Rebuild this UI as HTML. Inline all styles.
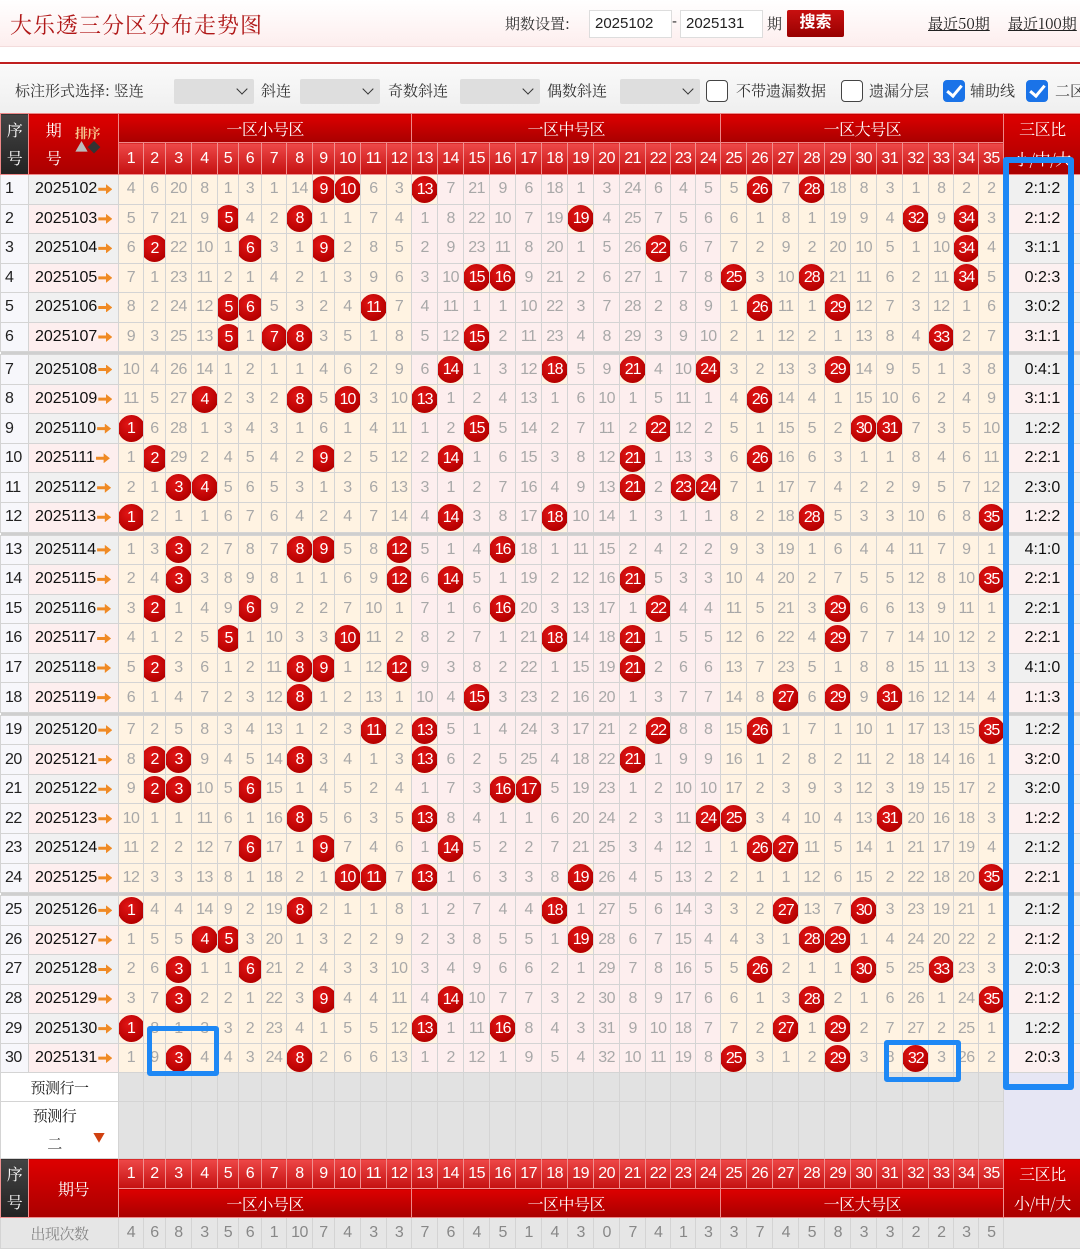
<!DOCTYPE html>
<html><head><meta charset="utf-8">
<style>
*{box-sizing:border-box;margin:0;padding:0}
body{width:1080px;height:1253px;overflow:hidden;background:#fff;font-family:"Liberation Sans","Noto Sans CJK SC",sans-serif;position:relative}
.sf{font-family:"Noto Serif CJK SC","Noto Serif CJK JP","Noto Serif CJK","Source Han Serif SC","Liberation Serif",serif}
.top{position:absolute;left:0;top:0;width:1080px;height:47px;background:linear-gradient(#fff,#fdeeee);border-bottom:1px solid #f3dcdc}
.title{position:absolute;left:10px;top:9px;font-size:22px;color:#b01818;letter-spacing:1px;font-weight:normal}
.q{position:absolute;top:13px;font-size:15px;color:#333}
.inp{position:absolute;top:10px;height:28px;border:1px solid #ddd;background:#fff;font-size:15px;padding:4px 0 0 5px;color:#222}
.btn{position:absolute;left:787px;top:10px;width:57px;height:27px;background:linear-gradient(#c81010,#980000);color:#fff;font-size:16px;font-weight:bold;text-align:center;line-height:26px;border-radius:2px}
.lnk{position:absolute;top:13px;font-size:15px;color:#222;text-decoration:underline;white-space:nowrap}
.rl{position:absolute;left:0;top:62px;width:1080px;height:2px;background:#c02020}
.fb{position:absolute;left:0;top:65px;width:1080px;height:48px;background:linear-gradient(#fafafa,#efefef)}
.ft{position:absolute;top:80px;font-size:15px;color:#333;white-space:nowrap}
.sel{position:absolute;top:79px;width:80px;height:25px;background:#dedede;border-radius:2px}
.sel:after{content:"";position:absolute;right:8px;top:6px;width:7px;height:7px;border-right:1.5px solid #333;border-bottom:1.5px solid #333;transform:rotate(45deg)}
.cb{position:absolute;top:80px;width:22px;height:22px;border:1.5px solid #444;border-radius:4px;background:#fff}
.cb.on{background:#1a73e8;border-color:#1a73e8}
.cb.on:after{content:"";position:absolute;left:6px;top:1px;width:6px;height:12px;border-right:3px solid #fff;border-bottom:3px solid #fff;transform:rotate(40deg)}
table{position:absolute;left:0;top:113px;width:1080px;border-collapse:collapse;table-layout:fixed}
td{border:1px solid #d4d4d4;text-align:center;font-size:16px;color:#a8a8a8;padding:0;white-space:nowrap;overflow:hidden;letter-spacing:-0.5px}
tr.r{height:29.55px}
tr.sp td{height:3px;background:#cfcfcf;border:0}
col.a{background:#fff3e2}col.b{background:#fdeeee}
td.s{background:#f7f7fb;color:#222;text-align:left;padding-left:4px}
td.p{color:#111;text-align:left;padding-left:6px;letter-spacing:0}
tr.o td.p{background:#f0f0f0}tr.e td.p{background:#fdeeee}
td.z{color:#111;letter-spacing:0}
tr.o td.z{background:#f0f0f0}tr.e td.z{background:#fcf0f0}
td.h{background:#fff3e2}
b{display:inline-block;width:27px;height:27px;border-radius:50%;background:radial-gradient(circle at 40% 35%,#e21616,#b60000 70%);color:#fff;font-weight:normal;line-height:27px;font-size:16px;letter-spacing:-1px;margin:0 -3px;vertical-align:middle}
i{display:inline-block;width:14px;height:10px;background:#f08a24;clip-path:polygon(0 35%,55% 35%,55% 0,100% 50%,55% 100%,55% 65%,0 65%);margin-left:1px;vertical-align:-1px}
.hz td{background:linear-gradient(#d00,#a80000);color:#fff;font-size:16px;border-color:#e88}
.hn td{background:linear-gradient(#ee4848,#c41010);color:#fff;font-size:16px;border-color:#f09090}
td.hs{background:linear-gradient(#444,#222)!important;color:#fff;font-size:16px;line-height:28px}
td.hp{background:linear-gradient(#d00,#a00)!important;color:#fff;font-size:16px;position:relative}
td.pr{background:#e2e2e2}
td.pl{background:#fff;color:#222;font-size:15px}
td.pz{background:#e6e6f4}
tr.cnt td{background:#e6e6e6;color:#888;height:31px}
.bx{position:absolute;border:6px solid #1e88f5;border-radius:3px}
</style></head><body>
<div class="top">
<div class="title sf">大乐透三分区分布走势图</div>
<div class="q sf" style="left:505px">期数设置:</div>
<div class="inp" style="left:589px;width:83px">2025102</div>
<div class="q" style="left:672px">-</div>
<div class="inp" style="left:680px;width:83px">2025131</div>
<div class="q sf" style="left:767px">期</div>
<div class="btn">搜索</div>
<div class="lnk sf" style="left:928px">最近50期</div>
<div class="lnk sf" style="left:1008px">最近100期</div>
</div>
<div class="rl"></div>
<div class="fb"></div>
<div class="ft sf" style="left:15px">标注形式选择: 竖连</div>
<div class="sel" style="left:174px"></div>
<div class="ft sf" style="left:261px">斜连</div>
<div class="sel" style="left:300px"></div>
<div class="ft sf" style="left:388px">奇数斜连</div>
<div class="sel" style="left:460px"></div>
<div class="ft sf" style="left:547px">偶数斜连</div>
<div class="sel" style="left:620px"></div>
<div class="cb" style="left:706px"></div>
<div class="ft sf" style="left:736px">不带遗漏数据</div>
<div class="cb" style="left:841px"></div>
<div class="ft sf" style="left:869px">遗漏分层</div>
<div class="cb on" style="left:943px"></div>
<div class="ft sf" style="left:970px">辅助线</div>
<div class="cb on" style="left:1026px"></div>
<div class="ft sf" style="left:1055px">二区</div>

<table>
<colgroup><col style="width:28px"><col style="width:90px">
<col class="a" style="width:25px"><col class="a" style="width:22px"><col class="a" style="width:26px"><col class="a" style="width:26px"><col class="a" style="width:21px"><col class="a" style="width:23px"><col class="a" style="width:25px"><col class="a" style="width:26px"><col class="a" style="width:22px"><col class="a" style="width:26px"><col class="a" style="width:26px"><col class="a" style="width:25px">
<col class="b" style="width:26px"><col class="b" style="width:26px"><col class="b" style="width:26px"><col class="b" style="width:26px"><col class="b" style="width:26px"><col class="b" style="width:26px"><col class="b" style="width:26px"><col class="b" style="width:26px"><col class="b" style="width:26px"><col class="b" style="width:25px"><col class="b" style="width:25px"><col class="b" style="width:25px">
<col class="a" style="width:26px"><col class="a" style="width:26px"><col class="a" style="width:26px"><col class="a" style="width:26px"><col class="a" style="width:26px"><col class="a" style="width:26px"><col class="a" style="width:26px"><col class="a" style="width:26px"><col class="a" style="width:25px"><col class="a" style="width:25px"><col class="a" style="width:25px">
<col style="width:77px"></colgroup>
<tr class="hz sf" style="height:28px"><td class="hs sf" rowspan="2">序<br>号</td><td class="hp sf" rowspan="2" style="line-height:28px;padding-right:40px">期<br>号<span style="position:absolute;left:46px;top:12px;font-size:13px;color:#f6c890;font-weight:bold;line-height:14px">排序<br><span style="color:#bbb">▲</span><span style="color:#333">◆</span></span></td><td colspan="12" class="sf">一区小号区</td><td colspan="12" class="sf">一区中号区</td><td colspan="11" class="sf">一区大号区</td><td rowspan="2" class="sf" style="line-height:30px;vertical-align:top;padding-top:0">三区比<br>小/中/大</td></tr>
<tr class="hn" style="height:30px"><td>1</td><td>2</td><td>3</td><td>4</td><td>5</td><td>6</td><td>7</td><td>8</td><td>9</td><td>10</td><td>11</td><td>12</td><td>13</td><td>14</td><td>15</td><td>16</td><td>17</td><td>18</td><td>19</td><td>20</td><td>21</td><td>22</td><td>23</td><td>24</td><td>25</td><td>26</td><td>27</td><td>28</td><td>29</td><td>30</td><td>31</td><td>32</td><td>33</td><td>34</td><td>35</td></tr>

<tr class="r o"><td class="s">1</td><td class="p">2025102<i></i></td><td>4</td><td>6</td><td>20</td><td>8</td><td>1</td><td>3</td><td>1</td><td>14</td><td class="h"><b>9</b></td><td class="h"><b>10</b></td><td>6</td><td>3</td><td class="h"><b>13</b></td><td>7</td><td>21</td><td>9</td><td>6</td><td>18</td><td>1</td><td>3</td><td>24</td><td>6</td><td>4</td><td>5</td><td>5</td><td class="h"><b>26</b></td><td>7</td><td class="h"><b>28</b></td><td>18</td><td>8</td><td>3</td><td>1</td><td>8</td><td>2</td><td>2</td><td class="z">2:1:2</td></tr>
<tr class="r e"><td class="s">2</td><td class="p">2025103<i></i></td><td>5</td><td>7</td><td>21</td><td>9</td><td class="h"><b>5</b></td><td>4</td><td>2</td><td class="h"><b>8</b></td><td>1</td><td>1</td><td>7</td><td>4</td><td>1</td><td>8</td><td>22</td><td>10</td><td>7</td><td>19</td><td class="h"><b>19</b></td><td>4</td><td>25</td><td>7</td><td>5</td><td>6</td><td>6</td><td>1</td><td>8</td><td>1</td><td>19</td><td>9</td><td>4</td><td class="h"><b>32</b></td><td>9</td><td class="h"><b>34</b></td><td>3</td><td class="z">2:1:2</td></tr>
<tr class="r o"><td class="s">3</td><td class="p">2025104<i></i></td><td>6</td><td class="h"><b>2</b></td><td>22</td><td>10</td><td>1</td><td class="h"><b>6</b></td><td>3</td><td>1</td><td class="h"><b>9</b></td><td>2</td><td>8</td><td>5</td><td>2</td><td>9</td><td>23</td><td>11</td><td>8</td><td>20</td><td>1</td><td>5</td><td>26</td><td class="h"><b>22</b></td><td>6</td><td>7</td><td>7</td><td>2</td><td>9</td><td>2</td><td>20</td><td>10</td><td>5</td><td>1</td><td>10</td><td class="h"><b>34</b></td><td>4</td><td class="z">3:1:1</td></tr>
<tr class="r e"><td class="s">4</td><td class="p">2025105<i></i></td><td>7</td><td>1</td><td>23</td><td>11</td><td>2</td><td>1</td><td>4</td><td>2</td><td>1</td><td>3</td><td>9</td><td>6</td><td>3</td><td>10</td><td class="h"><b>15</b></td><td class="h"><b>16</b></td><td>9</td><td>21</td><td>2</td><td>6</td><td>27</td><td>1</td><td>7</td><td>8</td><td class="h"><b>25</b></td><td>3</td><td>10</td><td class="h"><b>28</b></td><td>21</td><td>11</td><td>6</td><td>2</td><td>11</td><td class="h"><b>34</b></td><td>5</td><td class="z">0:2:3</td></tr>
<tr class="r o"><td class="s">5</td><td class="p">2025106<i></i></td><td>8</td><td>2</td><td>24</td><td>12</td><td class="h"><b>5</b></td><td class="h"><b>6</b></td><td>5</td><td>3</td><td>2</td><td>4</td><td class="h"><b>11</b></td><td>7</td><td>4</td><td>11</td><td>1</td><td>1</td><td>10</td><td>22</td><td>3</td><td>7</td><td>28</td><td>2</td><td>8</td><td>9</td><td>1</td><td class="h"><b>26</b></td><td>11</td><td>1</td><td class="h"><b>29</b></td><td>12</td><td>7</td><td>3</td><td>12</td><td>1</td><td>6</td><td class="z">3:0:2</td></tr>
<tr class="r e"><td class="s">6</td><td class="p">2025107<i></i></td><td>9</td><td>3</td><td>25</td><td>13</td><td class="h"><b>5</b></td><td>1</td><td class="h"><b>7</b></td><td class="h"><b>8</b></td><td>3</td><td>5</td><td>1</td><td>8</td><td>5</td><td>12</td><td class="h"><b>15</b></td><td>2</td><td>11</td><td>23</td><td>4</td><td>8</td><td>29</td><td>3</td><td>9</td><td>10</td><td>2</td><td>1</td><td>12</td><td>2</td><td>1</td><td>13</td><td>8</td><td>4</td><td class="h"><b>33</b></td><td>2</td><td>7</td><td class="z">3:1:1</td></tr>
<tr class="sp"><td colspan="38"></td></tr>
<tr class="r o"><td class="s">7</td><td class="p">2025108<i></i></td><td>10</td><td>4</td><td>26</td><td>14</td><td>1</td><td>2</td><td>1</td><td>1</td><td>4</td><td>6</td><td>2</td><td>9</td><td>6</td><td class="h"><b>14</b></td><td>1</td><td>3</td><td>12</td><td class="h"><b>18</b></td><td>5</td><td>9</td><td class="h"><b>21</b></td><td>4</td><td>10</td><td class="h"><b>24</b></td><td>3</td><td>2</td><td>13</td><td>3</td><td class="h"><b>29</b></td><td>14</td><td>9</td><td>5</td><td>1</td><td>3</td><td>8</td><td class="z">0:4:1</td></tr>
<tr class="r e"><td class="s">8</td><td class="p">2025109<i></i></td><td>11</td><td>5</td><td>27</td><td class="h"><b>4</b></td><td>2</td><td>3</td><td>2</td><td class="h"><b>8</b></td><td>5</td><td class="h"><b>10</b></td><td>3</td><td>10</td><td class="h"><b>13</b></td><td>1</td><td>2</td><td>4</td><td>13</td><td>1</td><td>6</td><td>10</td><td>1</td><td>5</td><td>11</td><td>1</td><td>4</td><td class="h"><b>26</b></td><td>14</td><td>4</td><td>1</td><td>15</td><td>10</td><td>6</td><td>2</td><td>4</td><td>9</td><td class="z">3:1:1</td></tr>
<tr class="r o"><td class="s">9</td><td class="p">2025110<i></i></td><td class="h"><b>1</b></td><td>6</td><td>28</td><td>1</td><td>3</td><td>4</td><td>3</td><td>1</td><td>6</td><td>1</td><td>4</td><td>11</td><td>1</td><td>2</td><td class="h"><b>15</b></td><td>5</td><td>14</td><td>2</td><td>7</td><td>11</td><td>2</td><td class="h"><b>22</b></td><td>12</td><td>2</td><td>5</td><td>1</td><td>15</td><td>5</td><td>2</td><td class="h"><b>30</b></td><td class="h"><b>31</b></td><td>7</td><td>3</td><td>5</td><td>10</td><td class="z">1:2:2</td></tr>
<tr class="r e"><td class="s">10</td><td class="p">2025111<i></i></td><td>1</td><td class="h"><b>2</b></td><td>29</td><td>2</td><td>4</td><td>5</td><td>4</td><td>2</td><td class="h"><b>9</b></td><td>2</td><td>5</td><td>12</td><td>2</td><td class="h"><b>14</b></td><td>1</td><td>6</td><td>15</td><td>3</td><td>8</td><td>12</td><td class="h"><b>21</b></td><td>1</td><td>13</td><td>3</td><td>6</td><td class="h"><b>26</b></td><td>16</td><td>6</td><td>3</td><td>1</td><td>1</td><td>8</td><td>4</td><td>6</td><td>11</td><td class="z">2:2:1</td></tr>
<tr class="r o"><td class="s">11</td><td class="p">2025112<i></i></td><td>2</td><td>1</td><td class="h"><b>3</b></td><td class="h"><b>4</b></td><td>5</td><td>6</td><td>5</td><td>3</td><td>1</td><td>3</td><td>6</td><td>13</td><td>3</td><td>1</td><td>2</td><td>7</td><td>16</td><td>4</td><td>9</td><td>13</td><td class="h"><b>21</b></td><td>2</td><td class="h"><b>23</b></td><td class="h"><b>24</b></td><td>7</td><td>1</td><td>17</td><td>7</td><td>4</td><td>2</td><td>2</td><td>9</td><td>5</td><td>7</td><td>12</td><td class="z">2:3:0</td></tr>
<tr class="r e"><td class="s">12</td><td class="p">2025113<i></i></td><td class="h"><b>1</b></td><td>2</td><td>1</td><td>1</td><td>6</td><td>7</td><td>6</td><td>4</td><td>2</td><td>4</td><td>7</td><td>14</td><td>4</td><td class="h"><b>14</b></td><td>3</td><td>8</td><td>17</td><td class="h"><b>18</b></td><td>10</td><td>14</td><td>1</td><td>3</td><td>1</td><td>1</td><td>8</td><td>2</td><td>18</td><td class="h"><b>28</b></td><td>5</td><td>3</td><td>3</td><td>10</td><td>6</td><td>8</td><td class="h"><b>35</b></td><td class="z">1:2:2</td></tr>
<tr class="sp"><td colspan="38"></td></tr>
<tr class="r o"><td class="s">13</td><td class="p">2025114<i></i></td><td>1</td><td>3</td><td class="h"><b>3</b></td><td>2</td><td>7</td><td>8</td><td>7</td><td class="h"><b>8</b></td><td class="h"><b>9</b></td><td>5</td><td>8</td><td class="h"><b>12</b></td><td>5</td><td>1</td><td>4</td><td class="h"><b>16</b></td><td>18</td><td>1</td><td>11</td><td>15</td><td>2</td><td>4</td><td>2</td><td>2</td><td>9</td><td>3</td><td>19</td><td>1</td><td>6</td><td>4</td><td>4</td><td>11</td><td>7</td><td>9</td><td>1</td><td class="z">4:1:0</td></tr>
<tr class="r e"><td class="s">14</td><td class="p">2025115<i></i></td><td>2</td><td>4</td><td class="h"><b>3</b></td><td>3</td><td>8</td><td>9</td><td>8</td><td>1</td><td>1</td><td>6</td><td>9</td><td class="h"><b>12</b></td><td>6</td><td class="h"><b>14</b></td><td>5</td><td>1</td><td>19</td><td>2</td><td>12</td><td>16</td><td class="h"><b>21</b></td><td>5</td><td>3</td><td>3</td><td>10</td><td>4</td><td>20</td><td>2</td><td>7</td><td>5</td><td>5</td><td>12</td><td>8</td><td>10</td><td class="h"><b>35</b></td><td class="z">2:2:1</td></tr>
<tr class="r o"><td class="s">15</td><td class="p">2025116<i></i></td><td>3</td><td class="h"><b>2</b></td><td>1</td><td>4</td><td>9</td><td class="h"><b>6</b></td><td>9</td><td>2</td><td>2</td><td>7</td><td>10</td><td>1</td><td>7</td><td>1</td><td>6</td><td class="h"><b>16</b></td><td>20</td><td>3</td><td>13</td><td>17</td><td>1</td><td class="h"><b>22</b></td><td>4</td><td>4</td><td>11</td><td>5</td><td>21</td><td>3</td><td class="h"><b>29</b></td><td>6</td><td>6</td><td>13</td><td>9</td><td>11</td><td>1</td><td class="z">2:2:1</td></tr>
<tr class="r e"><td class="s">16</td><td class="p">2025117<i></i></td><td>4</td><td>1</td><td>2</td><td>5</td><td class="h"><b>5</b></td><td>1</td><td>10</td><td>3</td><td>3</td><td class="h"><b>10</b></td><td>11</td><td>2</td><td>8</td><td>2</td><td>7</td><td>1</td><td>21</td><td class="h"><b>18</b></td><td>14</td><td>18</td><td class="h"><b>21</b></td><td>1</td><td>5</td><td>5</td><td>12</td><td>6</td><td>22</td><td>4</td><td class="h"><b>29</b></td><td>7</td><td>7</td><td>14</td><td>10</td><td>12</td><td>2</td><td class="z">2:2:1</td></tr>
<tr class="r o"><td class="s">17</td><td class="p">2025118<i></i></td><td>5</td><td class="h"><b>2</b></td><td>3</td><td>6</td><td>1</td><td>2</td><td>11</td><td class="h"><b>8</b></td><td class="h"><b>9</b></td><td>1</td><td>12</td><td class="h"><b>12</b></td><td>9</td><td>3</td><td>8</td><td>2</td><td>22</td><td>1</td><td>15</td><td>19</td><td class="h"><b>21</b></td><td>2</td><td>6</td><td>6</td><td>13</td><td>7</td><td>23</td><td>5</td><td>1</td><td>8</td><td>8</td><td>15</td><td>11</td><td>13</td><td>3</td><td class="z">4:1:0</td></tr>
<tr class="r e"><td class="s">18</td><td class="p">2025119<i></i></td><td>6</td><td>1</td><td>4</td><td>7</td><td>2</td><td>3</td><td>12</td><td class="h"><b>8</b></td><td>1</td><td>2</td><td>13</td><td>1</td><td>10</td><td>4</td><td class="h"><b>15</b></td><td>3</td><td>23</td><td>2</td><td>16</td><td>20</td><td>1</td><td>3</td><td>7</td><td>7</td><td>14</td><td>8</td><td class="h"><b>27</b></td><td>6</td><td class="h"><b>29</b></td><td>9</td><td class="h"><b>31</b></td><td>16</td><td>12</td><td>14</td><td>4</td><td class="z">1:1:3</td></tr>
<tr class="sp"><td colspan="38"></td></tr>
<tr class="r o"><td class="s">19</td><td class="p">2025120<i></i></td><td>7</td><td>2</td><td>5</td><td>8</td><td>3</td><td>4</td><td>13</td><td>1</td><td>2</td><td>3</td><td class="h"><b>11</b></td><td>2</td><td class="h"><b>13</b></td><td>5</td><td>1</td><td>4</td><td>24</td><td>3</td><td>17</td><td>21</td><td>2</td><td class="h"><b>22</b></td><td>8</td><td>8</td><td>15</td><td class="h"><b>26</b></td><td>1</td><td>7</td><td>1</td><td>10</td><td>1</td><td>17</td><td>13</td><td>15</td><td class="h"><b>35</b></td><td class="z">1:2:2</td></tr>
<tr class="r e"><td class="s">20</td><td class="p">2025121<i></i></td><td>8</td><td class="h"><b>2</b></td><td class="h"><b>3</b></td><td>9</td><td>4</td><td>5</td><td>14</td><td class="h"><b>8</b></td><td>3</td><td>4</td><td>1</td><td>3</td><td class="h"><b>13</b></td><td>6</td><td>2</td><td>5</td><td>25</td><td>4</td><td>18</td><td>22</td><td class="h"><b>21</b></td><td>1</td><td>9</td><td>9</td><td>16</td><td>1</td><td>2</td><td>8</td><td>2</td><td>11</td><td>2</td><td>18</td><td>14</td><td>16</td><td>1</td><td class="z">3:2:0</td></tr>
<tr class="r o"><td class="s">21</td><td class="p">2025122<i></i></td><td>9</td><td class="h"><b>2</b></td><td class="h"><b>3</b></td><td>10</td><td>5</td><td class="h"><b>6</b></td><td>15</td><td>1</td><td>4</td><td>5</td><td>2</td><td>4</td><td>1</td><td>7</td><td>3</td><td class="h"><b>16</b></td><td class="h"><b>17</b></td><td>5</td><td>19</td><td>23</td><td>1</td><td>2</td><td>10</td><td>10</td><td>17</td><td>2</td><td>3</td><td>9</td><td>3</td><td>12</td><td>3</td><td>19</td><td>15</td><td>17</td><td>2</td><td class="z">3:2:0</td></tr>
<tr class="r e"><td class="s">22</td><td class="p">2025123<i></i></td><td>10</td><td>1</td><td>1</td><td>11</td><td>6</td><td>1</td><td>16</td><td class="h"><b>8</b></td><td>5</td><td>6</td><td>3</td><td>5</td><td class="h"><b>13</b></td><td>8</td><td>4</td><td>1</td><td>1</td><td>6</td><td>20</td><td>24</td><td>2</td><td>3</td><td>11</td><td class="h"><b>24</b></td><td class="h"><b>25</b></td><td>3</td><td>4</td><td>10</td><td>4</td><td>13</td><td class="h"><b>31</b></td><td>20</td><td>16</td><td>18</td><td>3</td><td class="z">1:2:2</td></tr>
<tr class="r o"><td class="s">23</td><td class="p">2025124<i></i></td><td>11</td><td>2</td><td>2</td><td>12</td><td>7</td><td class="h"><b>6</b></td><td>17</td><td>1</td><td class="h"><b>9</b></td><td>7</td><td>4</td><td>6</td><td>1</td><td class="h"><b>14</b></td><td>5</td><td>2</td><td>2</td><td>7</td><td>21</td><td>25</td><td>3</td><td>4</td><td>12</td><td>1</td><td>1</td><td class="h"><b>26</b></td><td class="h"><b>27</b></td><td>11</td><td>5</td><td>14</td><td>1</td><td>21</td><td>17</td><td>19</td><td>4</td><td class="z">2:1:2</td></tr>
<tr class="r e"><td class="s">24</td><td class="p">2025125<i></i></td><td>12</td><td>3</td><td>3</td><td>13</td><td>8</td><td>1</td><td>18</td><td>2</td><td>1</td><td class="h"><b>10</b></td><td class="h"><b>11</b></td><td>7</td><td class="h"><b>13</b></td><td>1</td><td>6</td><td>3</td><td>3</td><td>8</td><td class="h"><b>19</b></td><td>26</td><td>4</td><td>5</td><td>13</td><td>2</td><td>2</td><td>1</td><td>1</td><td>12</td><td>6</td><td>15</td><td>2</td><td>22</td><td>18</td><td>20</td><td class="h"><b>35</b></td><td class="z">2:2:1</td></tr>
<tr class="sp"><td colspan="38"></td></tr>
<tr class="r o"><td class="s">25</td><td class="p">2025126<i></i></td><td class="h"><b>1</b></td><td>4</td><td>4</td><td>14</td><td>9</td><td>2</td><td>19</td><td class="h"><b>8</b></td><td>2</td><td>1</td><td>1</td><td>8</td><td>1</td><td>2</td><td>7</td><td>4</td><td>4</td><td class="h"><b>18</b></td><td>1</td><td>27</td><td>5</td><td>6</td><td>14</td><td>3</td><td>3</td><td>2</td><td class="h"><b>27</b></td><td>13</td><td>7</td><td class="h"><b>30</b></td><td>3</td><td>23</td><td>19</td><td>21</td><td>1</td><td class="z">2:1:2</td></tr>
<tr class="r e"><td class="s">26</td><td class="p">2025127<i></i></td><td>1</td><td>5</td><td>5</td><td class="h"><b>4</b></td><td class="h"><b>5</b></td><td>3</td><td>20</td><td>1</td><td>3</td><td>2</td><td>2</td><td>9</td><td>2</td><td>3</td><td>8</td><td>5</td><td>5</td><td>1</td><td class="h"><b>19</b></td><td>28</td><td>6</td><td>7</td><td>15</td><td>4</td><td>4</td><td>3</td><td>1</td><td class="h"><b>28</b></td><td class="h"><b>29</b></td><td>1</td><td>4</td><td>24</td><td>20</td><td>22</td><td>2</td><td class="z">2:1:2</td></tr>
<tr class="r o"><td class="s">27</td><td class="p">2025128<i></i></td><td>2</td><td>6</td><td class="h"><b>3</b></td><td>1</td><td>1</td><td class="h"><b>6</b></td><td>21</td><td>2</td><td>4</td><td>3</td><td>3</td><td>10</td><td>3</td><td>4</td><td>9</td><td>6</td><td>6</td><td>2</td><td>1</td><td>29</td><td>7</td><td>8</td><td>16</td><td>5</td><td>5</td><td class="h"><b>26</b></td><td>2</td><td>1</td><td>1</td><td class="h"><b>30</b></td><td>5</td><td>25</td><td class="h"><b>33</b></td><td>23</td><td>3</td><td class="z">2:0:3</td></tr>
<tr class="r e"><td class="s">28</td><td class="p">2025129<i></i></td><td>3</td><td>7</td><td class="h"><b>3</b></td><td>2</td><td>2</td><td>1</td><td>22</td><td>3</td><td class="h"><b>9</b></td><td>4</td><td>4</td><td>11</td><td>4</td><td class="h"><b>14</b></td><td>10</td><td>7</td><td>7</td><td>3</td><td>2</td><td>30</td><td>8</td><td>9</td><td>17</td><td>6</td><td>6</td><td>1</td><td>3</td><td class="h"><b>28</b></td><td>2</td><td>1</td><td>6</td><td>26</td><td>1</td><td>24</td><td class="h"><b>35</b></td><td class="z">2:1:2</td></tr>
<tr class="r o"><td class="s">29</td><td class="p">2025130<i></i></td><td class="h"><b>1</b></td><td>8</td><td>1</td><td>3</td><td>3</td><td>2</td><td>23</td><td>4</td><td>1</td><td>5</td><td>5</td><td>12</td><td class="h"><b>13</b></td><td>1</td><td>11</td><td class="h"><b>16</b></td><td>8</td><td>4</td><td>3</td><td>31</td><td>9</td><td>10</td><td>18</td><td>7</td><td>7</td><td>2</td><td class="h"><b>27</b></td><td>1</td><td class="h"><b>29</b></td><td>2</td><td>7</td><td>27</td><td>2</td><td>25</td><td>1</td><td class="z">1:2:2</td></tr>
<tr class="r e"><td class="s">30</td><td class="p">2025131<i></i></td><td>1</td><td>9</td><td class="h"><b>3</b></td><td>4</td><td>4</td><td>3</td><td>24</td><td class="h"><b>8</b></td><td>2</td><td>6</td><td>6</td><td>13</td><td>1</td><td>2</td><td>12</td><td>1</td><td>9</td><td>5</td><td>4</td><td>32</td><td>10</td><td>11</td><td>19</td><td>8</td><td class="h"><b>25</b></td><td>3</td><td>1</td><td>2</td><td class="h"><b>29</b></td><td>3</td><td>8</td><td class="h"><b>32</b></td><td>3</td><td>26</td><td>2</td><td class="z">2:0:3</td></tr>

<tr style="height:29px"><td class="pl sf" colspan="2">预测行一</td><td class="pr"></td><td class="pr"></td><td class="pr"></td><td class="pr"></td><td class="pr"></td><td class="pr"></td><td class="pr"></td><td class="pr"></td><td class="pr"></td><td class="pr"></td><td class="pr"></td><td class="pr"></td><td class="pr"></td><td class="pr"></td><td class="pr"></td><td class="pr"></td><td class="pr"></td><td class="pr"></td><td class="pr"></td><td class="pr"></td><td class="pr"></td><td class="pr"></td><td class="pr"></td><td class="pr"></td><td class="pr"></td><td class="pr"></td><td class="pr"></td><td class="pr"></td><td class="pr"></td><td class="pr"></td><td class="pr"></td><td class="pr"></td><td class="pr"></td><td class="pr"></td><td class="pr"></td><td class="pz" rowspan="2"></td></tr>
<tr style="height:57px"><td class="pl sf" colspan="2" style="line-height:28px;position:relative;padding-right:10px">预测行<br>二<span style="position:absolute;left:92px;top:22px;color:#d04010;font-size:12px">▼</span></td><td class="pr"></td><td class="pr"></td><td class="pr"></td><td class="pr"></td><td class="pr"></td><td class="pr"></td><td class="pr"></td><td class="pr"></td><td class="pr"></td><td class="pr"></td><td class="pr"></td><td class="pr"></td><td class="pr"></td><td class="pr"></td><td class="pr"></td><td class="pr"></td><td class="pr"></td><td class="pr"></td><td class="pr"></td><td class="pr"></td><td class="pr"></td><td class="pr"></td><td class="pr"></td><td class="pr"></td><td class="pr"></td><td class="pr"></td><td class="pr"></td><td class="pr"></td><td class="pr"></td><td class="pr"></td><td class="pr"></td><td class="pr"></td><td class="pr"></td><td class="pr"></td><td class="pr"></td></tr>

<tr class="hn" style="height:30px"><td class="hs sf" rowspan="2">序<br>号</td><td class="hp sf" rowspan="2">期号</td><td>1</td><td>2</td><td>3</td><td>4</td><td>5</td><td>6</td><td>7</td><td>8</td><td>9</td><td>10</td><td>11</td><td>12</td><td>13</td><td>14</td><td>15</td><td>16</td><td>17</td><td>18</td><td>19</td><td>20</td><td>21</td><td>22</td><td>23</td><td>24</td><td>25</td><td>26</td><td>27</td><td>28</td><td>29</td><td>30</td><td>31</td><td>32</td><td>33</td><td>34</td><td>35</td><td class="hp sf" rowspan="2" style="line-height:29px">三区比<br>小/中/大</td></tr>
<tr class="hz" style="height:29px"><td colspan="12" class="sf">一区小号区</td><td colspan="12" class="sf">一区中号区</td><td colspan="11" class="sf">一区大号区</td></tr>
<tr class="cnt"><td colspan="2" class="sf" style="font-size:15px">出现次数</td><td>4</td><td>6</td><td>8</td><td>3</td><td>5</td><td>6</td><td>1</td><td>10</td><td>7</td><td>4</td><td>3</td><td>3</td><td>7</td><td>6</td><td>4</td><td>5</td><td>1</td><td>4</td><td>3</td><td>0</td><td>7</td><td>4</td><td>1</td><td>3</td><td>3</td><td>7</td><td>4</td><td>5</td><td>8</td><td>3</td><td>3</td><td>2</td><td>2</td><td>3</td><td>5</td><td></td></tr>
</table>

<div class="bx" style="left:1003px;top:157px;width:71px;height:933px"></div>
<div class="bx" style="left:147px;top:1026px;width:72px;height:50px;border-width:5px"></div>
<div class="bx" style="left:884px;top:1040px;width:77px;height:42px;border-width:5px"></div>
</body></html>
